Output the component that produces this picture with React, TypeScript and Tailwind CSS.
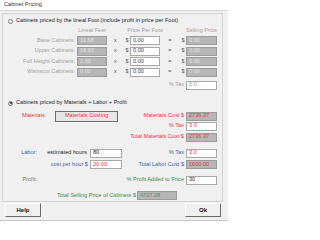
import React from 'react'

const red = 'text-[#e2383c]'
const blue = 'text-[#3d5fb0]'
const green = 'text-[#3f8f3f]'

type Kind = 'off' | 'ro' | 'in'

function Field({ w, value, kind, tone = '' }: { w: string; value: string; kind: Kind; tone?: string }) {
  const base = 'h-[9px] flex items-center pl-[2px] flex-none border overflow-hidden whitespace-nowrap'
  if (kind === 'off') {
    return <div className={`${base} ${w} bg-[#b6b6b6] border-[#9c9c9c] text-[#e4e4e4]`}>{value}</div>
  }
  if (kind === 'ro') {
    return <div className={`${base} ${w} bg-[#b6b6b6] border-[#9c9c9c] ${tone}`}>{value}</div>
  }
  return <div className={`${base} ${w} bg-white border-[#a8a8a8] ${tone || 'text-[#444]'}`}>{value}</div>
}

function Radio({ on }: { on?: boolean }) {
  return (
    <div className="w-[5px] h-[5px] rounded-full border border-[#7a7a7a] bg-white flex items-center justify-center flex-none">
      {on && <div className="w-[2px] h-[2px] rounded-full bg-[#222]" />}
    </div>
  )
}

function LinealRow({ label, feet }: { label: string; feet: string }) {
  return (
    <div className="h-[9px] flex items-center">
      <div className="w-[72px] text-right text-[#a2a2a2] whitespace-nowrap">{label}</div>
      <div className="w-[2px]" />
      <Field w="w-[30px]" value={feet} kind="off" />
      <div className="w-[17px] text-center text-[#555]">x</div>
      <div className="w-[6px] text-center text-[#555]">$</div>
      <Field w="w-[30px]" value="0.00" kind="in" />
      <div className="w-[20px] text-center text-[#555]">=</div>
      <div className="w-[6px] text-center text-[#555]">$</div>
      <Field w="w-[31px]" value="0.00" kind="off" />
    </div>
  )
}

function RightPair({ label, tone, children }: { label: string; tone: string; children: React.ReactNode }) {
  return (
    <>
      <div className={`flex-1 text-right pr-[2px] whitespace-nowrap ${tone}`}>{label}</div>
      {children}
    </>
  )
}

export default function App() {
  return (
    <div className="w-[228px] h-[221px] bg-[#f0f0f0] overflow-hidden text-[5.6px] leading-none text-[#1e1e1e] font-['Liberation_Sans',Arial,sans-serif] border-b border-[#c8c8c8]">
      <div className="h-[11px] bg-white border-b border-[#dadada] flex items-center pl-[4px] text-[#333]">
        Cabinet Pricing
      </div>

      <div className="mt-[2px] ml-[2px] w-[221px] h-[189px] border border-[#d3d3d3]">
        <div className="mt-[3px] h-[8px] flex items-center pl-[5px]">
          <Radio />
          <span className="ml-[3px] whitespace-nowrap">Cabinets priced by the lineal Foot (include profit in price per Foot)</span>
        </div>

        <div className="mt-[2px] h-[8px] flex items-center text-[#a2a2a2]">
          <div className="w-[74px]" />
          <div className="w-[30px] text-center whitespace-nowrap">Lineal Feet</div>
          <div className="w-[23px]" />
          <div className="w-[30px] flex justify-center whitespace-nowrap">Price Per Foot</div>
          <div className="w-[26px]" />
          <div className="w-[31px] flex justify-center whitespace-nowrap">Selling Price</div>
        </div>

        <div className="mt-[1px] flex flex-col gap-[1.5px]">
          <LinealRow label="Base Cabinets:" feet="11.68" />
          <LinealRow label="Upper Cabinets:" feet="16.83" />
          <LinealRow label="Full Height Cabinets:" feet="2.00" />
          <LinealRow label="Wainscot Cabinets:" feet="0.00" />
        </div>

        <div className="mt-[4px] h-[9px] flex items-center pr-[5px]">
          <RightPair label="% Tax" tone="text-[#a2a2a2]">
            <Field w="w-[31px]" value="0.0" kind="in" tone="text-[#999]" />
          </RightPair>
        </div>

        <div className="mt-[9.5px] h-[8px] flex items-center pl-[5px]">
          <Radio on />
          <span className="ml-[3px] whitespace-nowrap">Cabinets priced by Materials + Labor + Profit</span>
        </div>

        <div className="mt-[3.5px] h-[11px] flex items-center pr-[5px]">
          <div className={`ml-[19px] w-[33px] ${red}`}>Materials:</div>
          <button className={`w-[63px] h-[11px] flex-none bg-[#e6e6e6] border border-[#6e6e6e] flex items-center justify-center whitespace-nowrap ${red}`}>
            Materials Costing
          </button>
          <RightPair label="Materials Cost $" tone={red}>
            <Field w="w-[31px]" value="2736.37" kind="ro" tone={red} />
          </RightPair>
        </div>

        <div className="h-[9px] flex items-center pr-[5px]">
          <RightPair label="% Tax" tone={red}>
            <Field w="w-[31px]" value="3.0" kind="in" tone={red} />
          </RightPair>
        </div>

        <div className="mt-[2px] h-[9px] flex items-center pr-[5px]">
          <RightPair label="Total Materials Cost $" tone={red}>
            <Field w="w-[31px]" value="2736.37" kind="ro" tone={red} />
          </RightPair>
        </div>

        <div className="mt-[7px] h-[9px] flex items-center pr-[5px]">
          <div className={`w-[34px] text-right ${blue}`}>Labor:</div>
          <div className="w-[51px] text-right pr-[1px] whitespace-nowrap">estimated hours</div>
          <div className="w-[2px]" />
          <Field w="w-[32px]" value="80" kind="in" tone="text-[#222]" />
          <RightPair label="% Tax" tone={blue}>
            <Field w="w-[31px]" value="3.0" kind="in" tone={red} />
          </RightPair>
        </div>

        <div className="mt-[2.5px] h-[9px] flex items-center pr-[5px]">
          <div className="w-[34px]" />
          <div className={`w-[51px] text-right whitespace-nowrap ${blue}`}>cost per hour $</div>
          <div className="w-[2px]" />
          <Field w="w-[32px]" value="20.00" kind="in" tone={red} />
          <RightPair label="Total Labor Cost $" tone={blue}>
            <Field w="w-[31px]" value="1600.00" kind="ro" tone={red} />
          </RightPair>
        </div>

        <div className="mt-[6.5px] h-[9px] flex items-center pr-[5px]">
          <div className="w-[34px] text-right text-[#6f7f6f]">Profit:</div>
          <RightPair label="% Profit Added to Price" tone={green}>
            <Field w="w-[31px]" value="30" kind="in" tone="text-[#222]" />
          </RightPair>
        </div>

        <div className="mt-[6.5px] h-[9px] flex items-center">
          <div className={`w-[134px] text-right pr-[1px] whitespace-nowrap ${green}`}>Total Selling Price of Cabinets $</div>
          <Field w="w-[40px]" value="4727.28" kind="ro" tone="text-[#5f8f5f]" />
        </div>
      </div>

      <div className="mt-[1px] flex justify-between pl-[5px] pr-[7px]">
        <button className="w-[36px] h-[14px] bg-[#f0f0f0] border border-t-white border-l-white border-r-[#6a6a6a] border-b-[#6a6a6a] font-bold text-[6px] text-[#111]">
          Help
        </button>
        <button className="w-[36px] h-[14px] bg-[#f0f0f0] border border-t-white border-l-white border-r-[#6a6a6a] border-b-[#6a6a6a] font-bold text-[6px] text-[#111]">
          Ok
        </button>
      </div>
    </div>
  )
}
